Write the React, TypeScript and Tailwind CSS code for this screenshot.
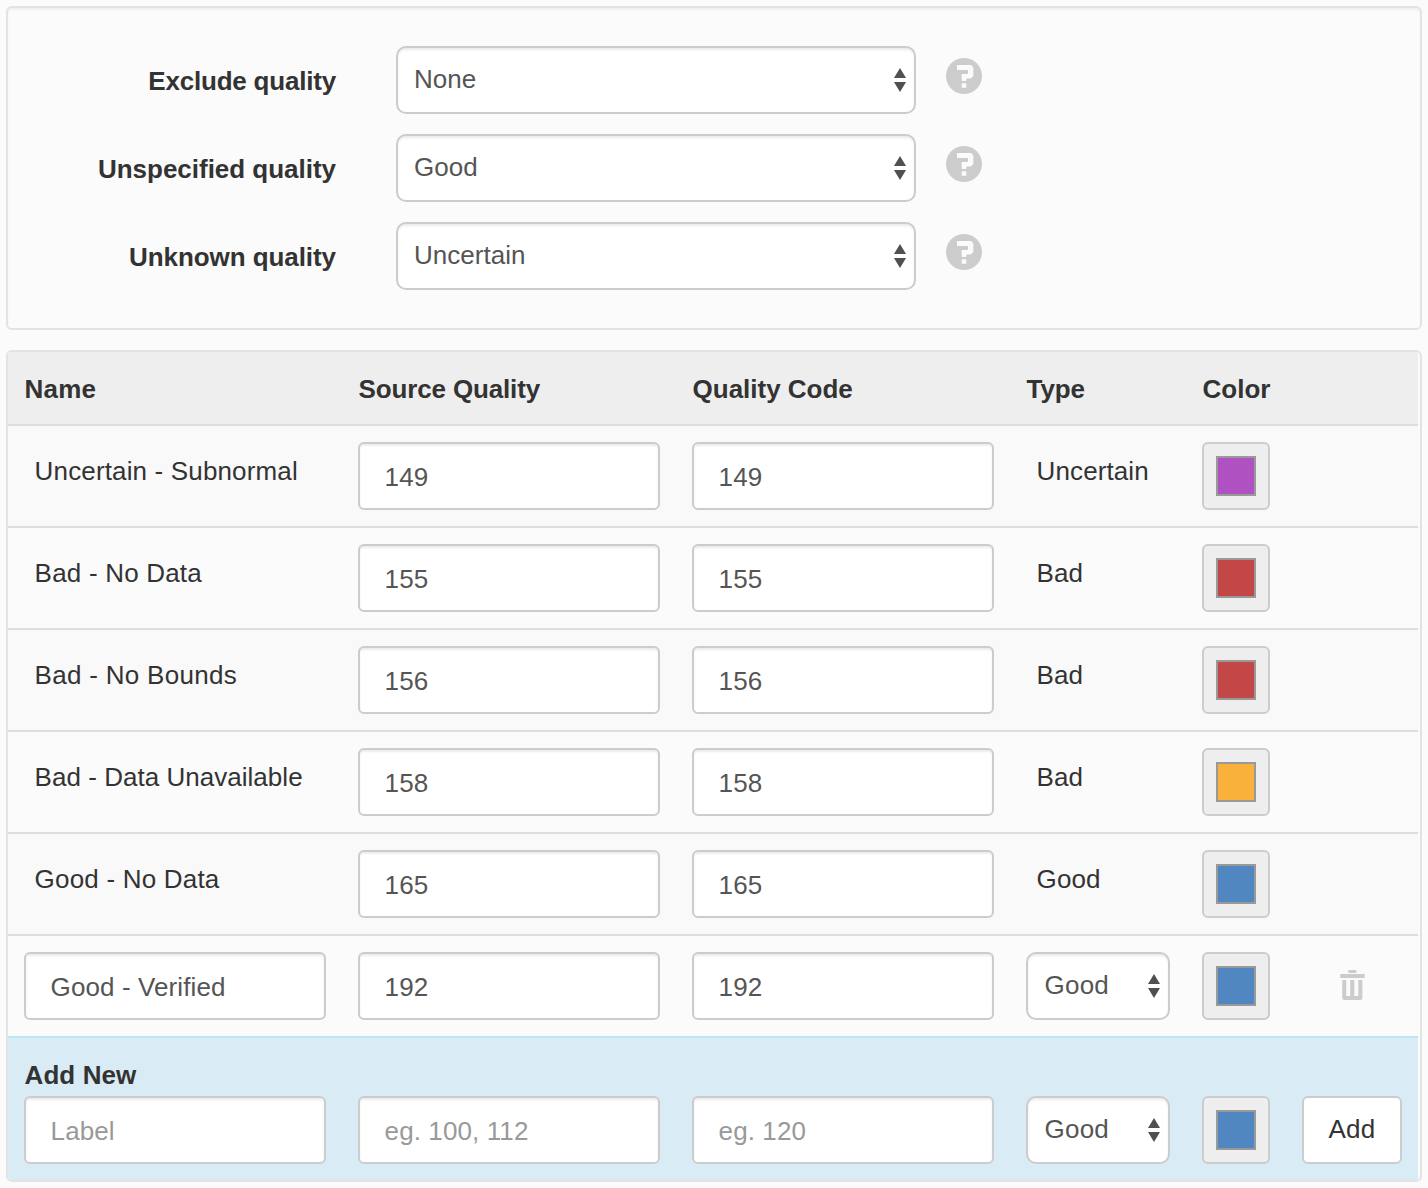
const filters = [
  { label: 'Exclude quality', value: 'None', tracking: 'tracking-[-0.2px]' },
  { label: 'Unspecified quality', value: 'Good', tracking: 'tracking-[-0.02px]' },
  { label: 'Unknown quality', value: 'Uncertain', tracking: 'tracking-[-0.07px]' },
];

const rows = [
  { name: 'Uncertain - Subnormal', code: '149', type: 'Uncertain', color: 'bg-[#b051c1]', tracking: 'tracking-[0.15px]' },
  { name: 'Bad - No Data', code: '155', type: 'Bad', color: 'bg-[#c44748]', tracking: 'tracking-[0.2px]' },
  { name: 'Bad - No Bounds', code: '156', type: 'Bad', color: 'bg-[#c44748]', tracking: 'tracking-[0.3px]' },
  { name: 'Bad - Data Unavailable', code: '158', type: 'Bad', color: 'bg-[#f9b13c]', tracking: 'tracking-[0.03px]' },
  { name: 'Good - No Data', code: '165', type: 'Good', color: 'bg-[#5087c0]', tracking: 'tracking-[0.2px]' },
];

const grid = 'grid grid-cols-[334px_334px_334px_176px_100px_132px]';

function HelpIcon() {
  return (
    <svg width="36" height="36" viewBox="0 0 36 36" className="mt-3 ml-[30px]">
      <circle cx="18" cy="18" r="18" fill="#ccc" />
      <path d="M11 7h14l2.300 2.300v8.700l-2.500 2.500h-4.500v2.500h-4.600v-7h6.300v-4h-11z M15.700 25.200h4.600v4.500h-4.600z" fill="#fbfbfb" />
    </svg>
  );
}

function TrashIcon() {
  return (
    <svg width="26" height="32" viewBox="0 0 26 32" fill="#ccc" className="mt-[27px] ml-[37px]">
      <path d="M9.300 1h8v3h-8z M1.200 5h24.500v4H1.200z" />
      <path fillRule="evenodd" d="M3.200 11h20.200v17.500q0 2.500-2.500 2.500H5.700q-2.500 0-2.500-2.500z M7.200 11v16h4V11z M15.300 11v16h4V11z" />
    </svg>
  );
}

function Select({ value, className }: { value: string; className: string }) {
  return (
    <div className={`flex h-[68px] items-center justify-between rounded-[10px] border-2 border-[#ccc] bg-white pl-4 shadow-[inset_0_2px_2px_rgba(0,0,0,0.075)] ${className}`}>
      <span className="pb-[2px] text-[#555]">{value}</span>
      <svg width="12" height="24" viewBox="0 0 12 24" fill="#505050">
        <path d="M6 0l6 10H0z M0 14h12l-6 10z" />
      </svg>
    </div>
  );
}

function Field({ value, placeholder }: { value?: string; placeholder?: string }) {
  return (
    <input
      defaultValue={value}
      placeholder={placeholder}
      className="block h-[68px] w-[302px] rounded-md border-2 border-[#ccc] bg-white pt-[2px] pl-[24.6px] tracking-[0.1px] text-[#555] shadow-[inset_0_2px_2px_rgba(0,0,0,0.075)] outline-none placeholder:text-[#999]"
    />
  );
}

function Swatch({ color }: { color: string }) {
  return (
    <div className="flex size-[68px] items-center justify-center rounded-md border-2 border-[#ccc] bg-[#eee]">
      <div className={`size-10 border-2 border-[#999] ${color}`} />
    </div>
  );
}

export default function App() {
  return (
    <div className="h-[1188px] w-[1428px] bg-[#fbfbfb] p-[6px] font-['Liberation_Sans',Arial,sans-serif] text-[26px] leading-10 tracking-[0.2px] text-[#333]">
      <section className="flex h-[324px] flex-col gap-5 rounded-md border-2 border-[#e3e3e3] bg-[#fbfbfb] pt-[38px] shadow-[inset_0_2px_2px_rgba(0,0,0,0.05)]">
        {filters.map((f) => (
          <div key={f.label} className="flex h-[68px]">
            <label className={`mr-[60px] w-[328px] pt-[15px] text-right font-bold ${f.tracking}`}>{f.label}</label>
            <Select value={f.value} className="w-[520px] pr-2 tracking-[0.03px]" />
            <HelpIcon />
          </div>
        ))}
      </section>

      <section className="mt-5 h-[832px] overflow-hidden rounded-md border-2 border-[#e3e3e3]">
        <div className="w-[1410px]">
          <div className={`${grid} h-[72px] bg-[#eee] pt-[17px] pl-[16.6px] font-bold`}>
            <span>Name</span>
            <span className="tracking-[-0.15px]">Source Quality</span>
            <span className="tracking-[-0.02px]">Quality Code</span>
            <span className="tracking-[-0.1px]">Type</span>
            <span className="tracking-[0px]">Color</span>
          </div>
          {rows.map((r) => (
            <div key={r.name} className={`${grid} h-[102px] border-t-2 border-[#ddd] pt-4 pl-4 odd:bg-[#fbfbfb] even:bg-[#f9f9f9]`}>
              <span className={`pt-[9px] pl-[10.6px] ${r.tracking}`}>{r.name}</span>
              <Field value={r.code} />
              <Field value={r.code} />
              <span className="pt-[9px] pl-[10.6px] tracking-[0.1px]">{r.type}</span>
              <Swatch color={r.color} />
            </div>
          ))}
          <div className={`${grid} h-[102px] border-t-2 border-[#ddd] bg-[#fbfbfb] pt-4 pl-4`}>
            <Field value="Good - Verified" />
            <Field value="192" />
            <Field value="192" />
            <Select value="Good" className="w-36 pr-2 pl-[16.6px]" />
            <Swatch color="bg-[#5087c0]" />
            <div className="-mt-[10px]">
              <TrashIcon />
            </div>
          </div>
          <div className="h-[144px] border-t-2 border-[#bce8f1] bg-[#d9ecf6] pt-[17px] pl-4">
            <div className="h-[41px] pl-[0.5px] font-bold tracking-[0.1px]">Add New</div>
            <div className={grid}>
              <Field placeholder="Label" />
              <Field placeholder="eg. 100, 112" />
              <Field placeholder="eg. 120" />
              <Select value="Good" className="w-36 pr-2 pl-[16.6px]" />
              <Swatch color="bg-[#5087c0]" />
              <button className="h-[68px] w-[100px] rounded-md border-2 border-[#ccc] bg-white pb-[2px]">Add</button>
            </div>
          </div>
        </div>
      </section>
    </div>
  );
}
